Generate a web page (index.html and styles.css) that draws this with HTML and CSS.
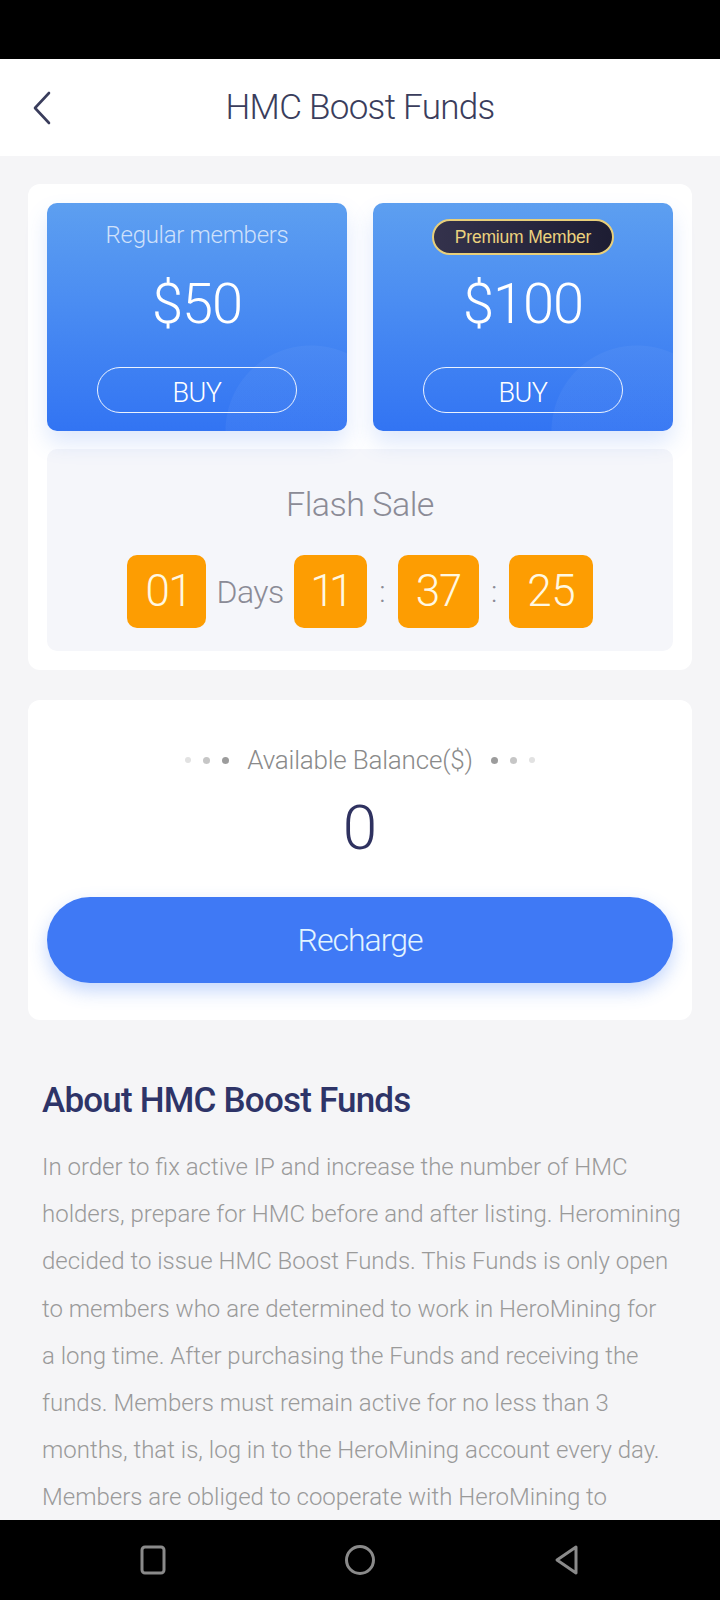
FILE: index.html
```html
<!DOCTYPE html>
<html lang="en">
<head>
    <meta charset="UTF-8">
    <title>HMC Boost Funds</title>
    <link rel="stylesheet" href="styles.css">
</head>
<body>
    <div class="status"></div>
    <header class="topbar">
        <a class="back" href="#">
            <svg width="20" height="34" viewBox="0 0 20 34"><path d="M17 2 L3 17 L17 32" fill="none" stroke="#3a3d5c" stroke-width="2.6" stroke-linecap="round" stroke-linejoin="round"/></svg>
        </a>
        <h1>HMC Boost Funds</h1>
        <span></span>
    </header>

    <main class="page">
        <section class="card plans">
            <div class="plan-row">
                <div class="plan">
                    <div class="plan-label">Regular members</div>
                    <div class="plan-price">$50</div>
                    <button class="buy">BUY</button>
                </div>
                <div class="plan">
                    <div class="plan-label"><span class="badge">Premium Member</span></div>
                    <div class="plan-price">$100</div>
                    <button class="buy">BUY</button>
                </div>
            </div>
            <div class="flash">
                <div class="flash-title">Flash Sale</div>
                <div class="countdown">
                    <span class="cell">01</span>
                    <span class="unit">Days</span>
                    <span class="cell">11</span>
                    <span class="sep">:</span>
                    <span class="cell">37</span>
                    <span class="sep">:</span>
                    <span class="cell">25</span>
                </div>
            </div>
        </section>

        <section class="card balance">
            <div class="balance-label">
                <span class="dots"><i class="d1"></i><i class="d2"></i><i class="d3"></i></span>
                Available Balance($)
                <span class="dots"><i class="d3"></i><i class="d2"></i><i class="d1"></i></span>
            </div>
            <div class="balance-value">0</div>
            <button class="recharge">Recharge</button>
        </section>

        <section class="about">
            <h2>About HMC Boost Funds</h2>
            <p>In order to fix active IP and increase the number of HMC<br>
            holders, prepare for HMC before and after listing. Heromining<br>
            decided to issue HMC Boost Funds. This Funds is only open<br>
            to members who are determined to work in HeroMining for<br>
            a long time. After purchasing the Funds and receiving the<br>
            funds. Members must remain active for no less than 3<br>
            months, that is, log in to the HeroMining account every day.<br>
            Members are obliged to cooperate with HeroMining to<br>
            promote HMC and help the project grow steadily.</p>
        </section>
    </main>

    <nav class="navbar">
        <svg width="30" height="30" viewBox="0 0 30 30"><rect x="4" y="2" width="22" height="26" rx="3" fill="none" stroke="#8a8a8a" stroke-width="3"/></svg>
        <svg width="34" height="34" viewBox="0 0 34 34"><circle cx="17" cy="17" r="13.5" fill="none" stroke="#8a8a8a" stroke-width="3"/></svg>
        <svg width="30" height="34" viewBox="0 0 30 34"><path d="M24 4 L5 17 L24 30 Z" fill="none" stroke="#8a8a8a" stroke-width="3" stroke-linejoin="round"/></svg>
    </nav>
</body>
</html>
```

FILE: styles.css
```css
body { margin: 0; padding: 0; background: #f5f5f7; font-family: Roboto, "Noto Sans", sans-serif; font-weight: 300; height: 1600px; overflow: hidden; }
.status { height: 59px; background: #000; }
.topbar { height: 97px; background: #fff; display: grid; grid-template-columns: 90px 1fr 90px; align-items: center; }
.back { display: flex; padding-left: 32px; }
.topbar h1 { margin: 0; text-align: center; font-size: 35px; font-weight: 300; color: #3a3d5c; letter-spacing: -0.7px; }

.page { padding: 28px 28px 0; }
.card { background: #fff; border-radius: 12px; }

.plans { padding: 19px; }
.plan-row { display: grid; grid-template-columns: 1fr 1fr; gap: 26px; position: relative; z-index: 1; }
.plan { height: 228px; border-radius: 10px; display: flex; flex-direction: column; align-items: center; padding-top: 14px; box-sizing: border-box;
    background: radial-gradient(circle at 88% 100%, rgba(255,255,255,0.045) 0, rgba(255,255,255,0.045) 85px, transparent 86px),
                linear-gradient(180deg, #5d9ff0 0%, #4a8cf2 45%, #3274f3 100%);
    box-shadow: 0 12px 22px rgba(70, 130, 240, 0.18); }
.plan-label { height: 36px; line-height: 36px; font-size: 24px; color: rgba(255,255,255,0.72); letter-spacing: -0.3px; }
.badge { display: inline-block; height: 32px; line-height: 32px; padding: 0 21px; border: 2px solid #e8cf7a; border-radius: 18px; background: linear-gradient(90deg, #34324c, #1d1d33); color: #ecd27e; font-family: "Liberation Sans", Arial, sans-serif; font-weight: 400; font-size: 17.5px; letter-spacing: -0.2px; }
.plan-price { margin-top: 16px; height: 70px; line-height: 70px; font-size: 56px; color: #fff; letter-spacing: -1px; }
.buy { margin-top: 28px; width: 200px; height: 46px; border: 1.5px solid rgba(255,255,255,0.9); border-radius: 23px; background: transparent; color: #fff; font-family: inherit; font-weight: 300; font-size: 27px; padding: 5px 0 0; letter-spacing: -0.5px; }

.flash { margin-top: 18px; background: #f5f6fa; border-radius: 10px; padding: 30px 0 23px; text-align: center; }
.flash-title { height: 50px; line-height: 50px; font-size: 34px; color: #8b8b96; letter-spacing: -0.5px; }
.countdown { margin-top: 26px; display: flex; justify-content: center; align-items: center; gap: 10px; height: 73px; }
.cell { height: 73px; line-height: 73px; padding: 0 18px; background: #fd9d02; border-radius: 10px; color: #fff8e2; font-size: 44px; letter-spacing: -0.5px; font-variant-numeric: proportional-nums; }
.unit { font-size: 32px; color: #8b8b96; letter-spacing: -0.5px; }
.sep { font-size: 30px; color: #8b8b96; padding: 0 2px; }

.balance { margin-top: 30px; padding: 40px 19px 37px; text-align: center; }
.balance-label { height: 40px; line-height: 40px; font-size: 26px; color: #8a8a8a; display: flex; justify-content: center; align-items: center; gap: 18px; letter-spacing: -0.2px; }
.dots { display: flex; align-items: center; gap: 12px; }
.dots i { display: block; width: 7px; height: 7px; border-radius: 50%; }
.dots .d1 { background: #e2e2e2; width: 6px; height: 6px; }
.dots .d2 { background: #c6c6c6; }
.dots .d3 { background: #9c9c9c; }
.balance-value { margin-top: 12px; height: 72px; line-height: 72px; font-size: 62px; color: #2f3260; }
.recharge { margin-top: 33px; width: 100%; height: 86px; border: none; border-radius: 43px; background: #3f79f5; color: #e2f4ff; font-family: inherit; font-weight: 300; font-size: 32px; letter-spacing: -1px; box-shadow: 0 8px 18px rgba(63, 121, 245, 0.3); }

.about { padding: 0 14px; }
.about h2 { margin: 56px 0 0; height: 50px; line-height: 50px; font-size: 35px; font-weight: 500; color: #2e3468; letter-spacing: -0.8px; }
.about p { margin: 18px 0 0; font-size: 24px; line-height: 47.2px; color: #9a9a9a; letter-spacing: 0; white-space: nowrap; }

.navbar { position: fixed; left: 0; right: 0; bottom: 0; height: 80px; background: #000; display: flex; justify-content: space-between; align-items: center; padding: 0 138px 0 138px; }
```
